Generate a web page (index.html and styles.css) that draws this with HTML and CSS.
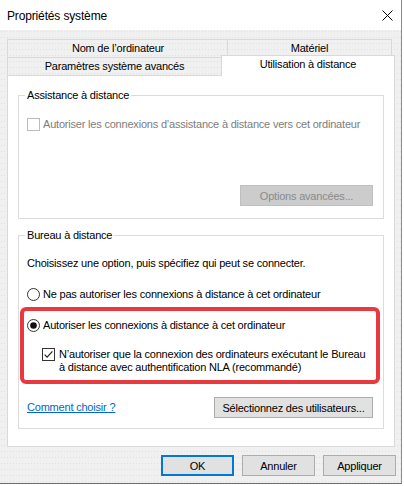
FILE: index.html
```html
<!DOCTYPE html>
<html lang="fr">
<head>
<meta charset="utf-8">
<title>Propriétés système</title>
<link rel="stylesheet" href="styles.css">
</head>
<body>
<div class="window">
  <div class="titlebar">
    <span class="title">Propriétés système</span>
    <svg class="close" width="11" height="11" viewBox="0 0 11 11"><path d="M0.5 0.5 L10.5 10.5 M10.5 0.5 L0.5 10.5" stroke="#000" stroke-width="1" fill="none"/></svg>
  </div>
  <div class="client">
    <div class="tabs">
      <div class="tabrow row1">
        <div class="tab t-nom">Nom de l’ordinateur</div>
        <div class="tab t-mat">Matériel</div>
      </div>
      <div class="tabrow row2">
        <div class="tab t-par">Paramètres système avancés</div>
        <div class="tab t-util">Utilisation à distance</div>
      </div>
    </div>
    <div class="panel">
      <div class="group g1">
        <div class="legend">Assistance à distance</div>
        <div class="opt opt-assist disabled">
          <svg class="box" width="13" height="13" viewBox="0 0 13 13"><rect x="0.5" y="0.5" width="12" height="12" fill="#fff" stroke="#bcbcbc"/></svg>
          <span>Autoriser les connexions d’assistance à distance vers cet ordinateur</span>
        </div>
        <div class="btnrow btnrow-adv">
          <div class="btn btn-adv disabled">Options avancées...</div>
        </div>
      </div>
      <div class="group g2">
        <div class="legend">Bureau à distance</div>
        <div class="intro">Choisissez une option, puis spécifiez qui peut se connecter.</div>
        <div class="opt opt-no">
          <svg class="box" width="13" height="13" viewBox="0 0 13 13"><circle cx="6.5" cy="6.5" r="6" fill="#fff" stroke="#333"/></svg>
          <span>Ne pas autoriser les connexions à distance à cet ordinateur</span>
        </div>
        <div class="highlight">
          <div class="opt opt-yes">
            <svg class="box" width="13" height="13" viewBox="0 0 13 13"><circle cx="6.5" cy="6.5" r="6" fill="#fff" stroke="#333"/><circle cx="6.5" cy="6.5" r="3.3" fill="#111"/></svg>
            <span>Autoriser les connexions à distance à cet ordinateur</span>
          </div>
          <div class="opt opt-nla">
            <svg class="box" width="13" height="13" viewBox="0 0 13 13"><rect x="0.5" y="0.5" width="12" height="12" fill="#fff" stroke="#333"/><path d="M2.6 6.6 L5.1 9.1 L10.4 3.4" stroke="#222" stroke-width="1.2" fill="none"/></svg>
            <span>N’autoriser que la connexion des ordinateurs exécutant le Bureau<br>à distance avec authentification NLA (recommandé)</span>
          </div>
        </div>
        <div class="btnrow btnrow-users">
          <a class="link" href="#">Comment choisir ?</a>
          <div class="btn btn-users">Sélectionnez des utilisateurs...</div>
        </div>
      </div>
    </div>
    <div class="footer">
      <div class="btn btn-foot btn-ok">OK</div>
      <div class="btn btn-foot">Annuler</div>
      <div class="btn btn-foot">Appliquer</div>
    </div>
  </div>
</div>
</body>
</html>
```

FILE: styles.css
```css
html, body {
  margin: 0;
  padding: 0;
  background: #ffffff;
}

body {
  font-family: "Liberation Sans", Arial, sans-serif;
  font-size: 11px;
  letter-spacing: -0.2px;
  color: #000;
}

.window {
  width: 401px;
  height: 483px;
  border-right: 1px solid #8a8a8a;
  border-bottom: 1px solid #6e6e6e;
  display: flex;
  flex-direction: column;
  overflow: hidden;
}

.titlebar {
  height: 30px;
  flex: none;
  background: #ffffff;
  display: flex;
  align-items: center;
  justify-content: space-between;
  padding: 0 8px 0 7px;
}

.title {
  font-size: 12px;
  letter-spacing: -0.15px;
  line-height: 14px;
  margin-top: 1px;
}

.close {
  display: block;
  margin-top: 0px;
}

.client {
  flex: 1;
  background-color: #f0f0f0;
  background-image: radial-gradient(circle at 1.5px 1.5px, #e0e0e0 0.6px, transparent 0.7px);
  background-size: 3px 6px;
  padding: 9px 0 0 7px;
  display: flex;
  flex-direction: column;
}

.tabs {
  width: 388px;
}

.tabrow {
  display: flex;
  height: 18px;
}

.tab {
  box-sizing: border-box;
  height: 18px;
  border-top: 1px solid #d9d9d9;
  border-left: 1px solid #d9d9d9;
  text-align: center;
  line-height: 17px;
  white-space: nowrap;
}

.t-nom {
  width: 221px;
}

.t-mat {
  width: 165px;
  border-left: 1px solid #d9d9d9;
  border-right: 1px solid #d9d9d9;
  margin-left: -1px;
}

.t-par {
  width: 214px;
  line-height: 17px;
}

.t-util {
  width: 174px;
  height: 21px;
  margin-top: -2px;
  background: #ffffff;
  border-right: 1px solid #d9d9d9;
  line-height: 16px;
  position: relative;
  z-index: 2;
}

.panel {
  box-sizing: border-box;
  width: 388px;
  background: #ffffff;
  border: 1px solid #d9d9d9;
  padding: 19px 10px 17px 10px;
  position: relative;
  z-index: 1;
}

.group {
  border: 1px solid #dcdcdc;
  padding: 0 10px 0 8px;
  display: flex;
  flex-direction: column;
}

.g1 {
  padding-bottom: 12px;
}

.g2 {
  margin-top: 16px;
  padding-bottom: 10px;
}

.legend {
  width: max-content;
  margin: -7px 0 0 -2px;
  padding: 0 2px;
  background: #ffffff;
  line-height: 13px;
}

.opt {
  display: flex;
  align-items: flex-start;
  gap: 3px;
  line-height: 13px;
}

.opt .box {
  flex: none;
  display: block;
}

.disabled {
  color: #7d7d7d;
}

.opt-assist {
  margin-top: 16px;
}

.btnrow {
  display: flex;
  align-items: center;
  justify-content: space-between;
}

.btnrow-adv {
  justify-content: flex-end;
  margin-top: 54px;
}

.btn {
  box-sizing: border-box;
  height: 21px;
  background: #e1e1e1;
  border: 1px solid #adadad;
  display: flex;
  align-items: center;
  justify-content: center;
  white-space: nowrap;
}

.btn.disabled {
  background: #cccccc;
  border-color: #bfbfbf;
  color: #8a8a8a;
}

.btn-adv {
  width: 133px;
}

.intro {
  margin-top: 15px;
  line-height: 13px;
}

.opt-no {
  margin-top: 18px;
}

.highlight {
  margin: 6px -7px 0 -7px;
  border: 4px solid #e8393f;
  border-radius: 6px;
  padding: 8px 3px 6px 3px;
}

.opt-nla {
  margin-top: 16px;
  margin-left: 15px;
  gap: 4px;
}

.btnrow-users {
  margin-top: 13px;
}

.link {
  color: #0066cc;
  text-decoration: underline;
  line-height: 13px;
}

.btn-users {
  width: 159px;
}

.footer {
  display: flex;
  justify-content: flex-end;
  gap: 8px;
  margin-top: 8px;
  padding-right: 5px;
}

.btn-foot {
  width: 73px;
}

.btn-ok {
  border: 2px solid #0078d7;
}
```
